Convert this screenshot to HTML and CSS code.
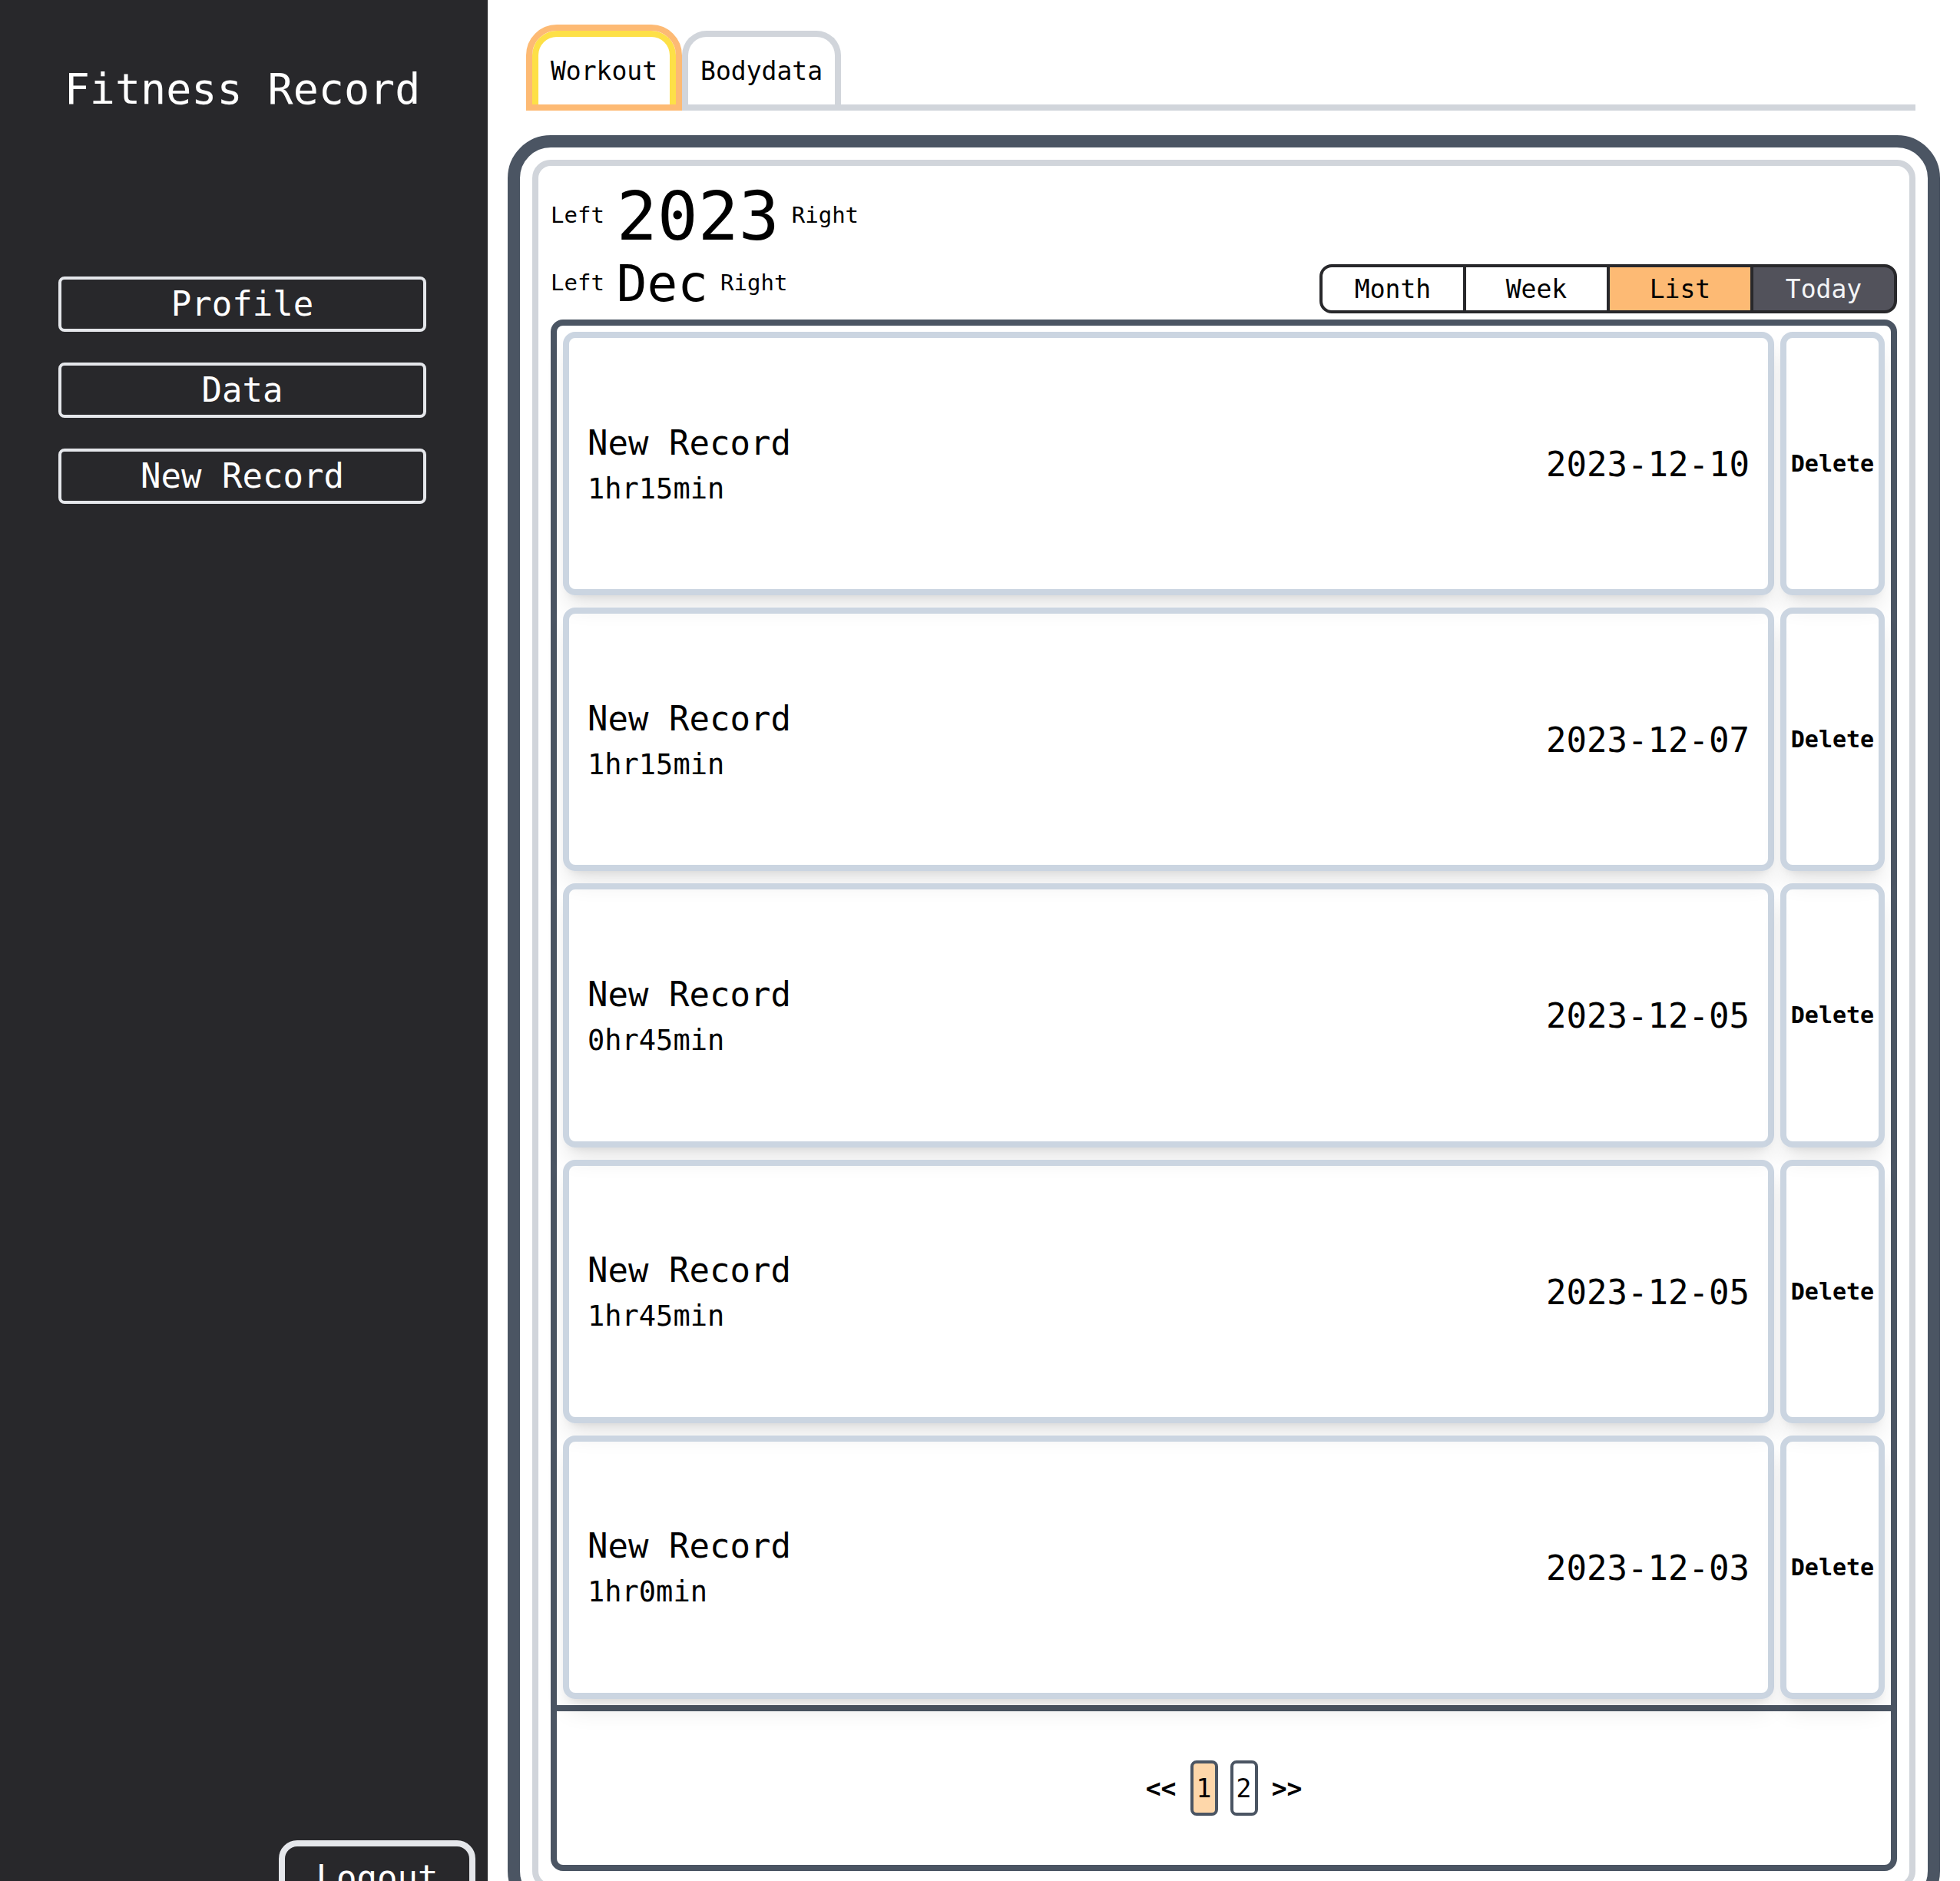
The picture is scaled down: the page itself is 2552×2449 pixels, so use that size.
FILE: index.html
```html
<!DOCTYPE html>
<html lang="en">
<head>
  <meta charset="utf-8">
  <title>Fitness Record</title>
  <link rel="stylesheet" href="styles.css">
</head>
<body>
  <div class="app">
    <aside class="sidebar">
      <h1 class="brand">Fitness Record</h1>
      <nav class="menu">
        <a class="menu-link" href="#profile">Profile</a>
        <a class="menu-link" href="#data">Data</a>
        <a class="menu-link" href="#new">New Record</a>
      </nav>
      <button class="logout" type="button">Logout</button>
    </aside>

    <main class="main">
      <div class="tabs" role="tablist">
        <button class="tab tab-active" type="button" role="tab" aria-selected="true">Workout</button>
        <button class="tab" type="button" role="tab" aria-selected="false">Bodydata</button>
      </div>

      <section class="frame">
        <div class="panel">
          <header class="toolbar">
            <div class="period">
              <div class="stepper stepper-year">
                <button class="step" type="button">Left</button>
                <span class="year">2023</span>
                <button class="step" type="button">Right</button>
              </div>
              <div class="stepper">
                <button class="step" type="button">Left</button>
                <span class="month">Dec</span>
                <button class="step" type="button">Right</button>
              </div>
            </div>
            <div class="views">
              <button class="view" type="button">Month</button>
              <button class="view" type="button">Week</button>
              <button class="view view-active" type="button">List</button>
              <button class="view view-today" type="button">Today</button>
            </div>
          </header>

          <div class="records">
            <ul class="record-list">
              <li class="record">
                <a class="card" href="#r1">
                  <span class="info"><span class="name">New Record</span><span class="duration">1hr15min</span></span>
                  <time class="date">2023-12-10</time>
                </a>
                <button class="delete" type="button">Delete</button>
              </li>
              <li class="record">
                <a class="card" href="#r2">
                  <span class="info"><span class="name">New Record</span><span class="duration">1hr15min</span></span>
                  <time class="date">2023-12-07</time>
                </a>
                <button class="delete" type="button">Delete</button>
              </li>
              <li class="record">
                <a class="card" href="#r3">
                  <span class="info"><span class="name">New Record</span><span class="duration">0hr45min</span></span>
                  <time class="date">2023-12-05</time>
                </a>
                <button class="delete" type="button">Delete</button>
              </li>
              <li class="record">
                <a class="card" href="#r4">
                  <span class="info"><span class="name">New Record</span><span class="duration">1hr45min</span></span>
                  <time class="date">2023-12-05</time>
                </a>
                <button class="delete" type="button">Delete</button>
              </li>
              <li class="record">
                <a class="card" href="#r5">
                  <span class="info"><span class="name">New Record</span><span class="duration">1hr0min</span></span>
                  <time class="date">2023-12-03</time>
                </a>
                <button class="delete" type="button">Delete</button>
              </li>
            </ul>
            <nav class="pager" aria-label="Pages">
              <button class="jump" type="button">&lt;&lt;</button>
              <button class="page page-active" type="button">1</button>
              <button class="page" type="button">2</button>
              <button class="jump" type="button">&gt;&gt;</button>
            </nav>
          </div>
        </div>
      </section>
    </main>
  </div>
</body>
</html>
```
FILE: styles.css
```css
:root {
  --ink: #28282b;
  --slate: #4b5563;
  --line: #d1d5db;
  --card-line: #cbd5e1;
  --orange: #fdba74;
}

* {
  box-sizing: border-box;
}

body {
  margin: 0;
  height: 100vh;
  overflow: hidden;
  background: #fff;
  color: #000;
  font-family: "DejaVu Sans Mono", "Liberation Mono", monospace;
}

button {
  margin: 0;
  padding: 0;
  border: 0;
  background: transparent;
  color: inherit;
  font: inherit;
}

a {
  color: inherit;
  text-decoration: none;
}

.app {
  display: grid;
  grid-template-columns: 635px 1fr;
}

/* Sidebar */

.sidebar {
  display: flex;
  flex-direction: column;
  padding: 80px 80px 0 76px;
  background: var(--ink);
  color: #fff;
}

.brand {
  margin: 0 0 208px;
  font-size: 55px;
  font-weight: 400;
  line-height: 72px;
  text-align: center;
  white-space: nowrap;
}

.menu {
  display: flex;
  flex-direction: column;
  gap: 40px;
}

.menu-link {
  border: 4px solid #e5e7eb;
  border-radius: 8px;
  font-size: 44px;
  line-height: 64px;
  text-align: center;
}

.logout {
  align-self: flex-end;
  width: 256px;
  height: 96px;
  margin-top: auto;
  margin-right: -64px;
  border: 8px solid #e5e7eb;
  border-radius: 24px;
  font-size: 44px;
}

/* Tabs */

.main {
  padding: 40px 26px 0;
}

.tabs {
  display: flex;
  gap: 8px;
  margin: 0 32px 32px;
  border-bottom: 8px solid var(--line);
}

.tab {
  height: 96px;
  padding: 0 16px;
  border: 8px solid var(--line);
  border-bottom: 0;
  border-radius: 32px 32px 0 0;
  font-size: 33px;
}

.tab-active {
  border-color: #fde047;
  outline: 8px solid var(--orange);
}

/* Panel */

.frame {
  padding: 16px;
  border: 16px solid var(--slate);
  border-radius: 56px;
}

.panel {
  padding: 16px;
  border: 8px solid var(--line);
  border-radius: 24px;
}

.toolbar {
  display: flex;
  align-items: flex-end;
  justify-content: space-between;
  margin-bottom: 8px;
}

.stepper {
  display: flex;
  align-items: center;
  gap: 16px;
  height: 80px;
}

.stepper-year {
  height: 96px;
}

.step {
  font-size: 29px;
}

.year,
.month {
  padding-top: 4px;
  line-height: 80px;
}

.year {
  font-size: 88px;
}

.month {
  font-size: 66px;
}

.views {
  display: grid;
  grid-template-columns: repeat(4, 1fr);
  gap: 4px;
  width: 752px;
  height: 64px;
  border: 4px solid var(--ink);
  border-radius: 16px;
  background: var(--ink);
  overflow: hidden;
}

.view {
  background: #fff;
  font-size: 33px;
}

.view-active {
  background: var(--orange);
}

.view-today {
  background: #52525b;
  color: #f3f4f6;
}

/* Records */

.records {
  border: 8px solid var(--slate);
  border-radius: 16px;
}

.record-list {
  display: grid;
  grid-auto-rows: 1fr;
  min-height: 1796px;
  margin: 0;
  padding: 0;
  list-style: none;
}

.record {
  display: grid;
  grid-template-columns: 1fr 136px;
  gap: 8px;
  padding: 8px;
}

.card,
.delete {
  border: 8px solid var(--card-line);
  border-radius: 16px;
  box-shadow: 0 20px 30px -6px rgba(0, 0, 0, 0.1), 0 8px 12px -8px rgba(0, 0, 0, 0.1);
}

.card {
  display: flex;
  align-items: center;
  justify-content: space-between;
  padding: 2px 24px 0;
}

.info {
  display: flex;
  flex-direction: column;
}

.name {
  font-size: 44px;
  line-height: 64px;
}

.duration {
  font-size: 37px;
  line-height: 56px;
}

.date {
  font-size: 44px;
}

.delete {
  font-size: 30px;
  font-weight: 700;
}

/* Pager */

.pager {
  display: flex;
  align-items: center;
  justify-content: center;
  gap: 16px;
  height: 208px;
  border-top: 8px solid var(--slate);
}

.jump {
  width: 44px;
  font-size: 33px;
  font-weight: 700;
}

.page {
  width: 36px;
  height: 72px;
  border: 4px solid var(--slate);
  border-radius: 8px;
  font-size: 33px;
}

.page-active {
  background: #fed7aa;
}
```
